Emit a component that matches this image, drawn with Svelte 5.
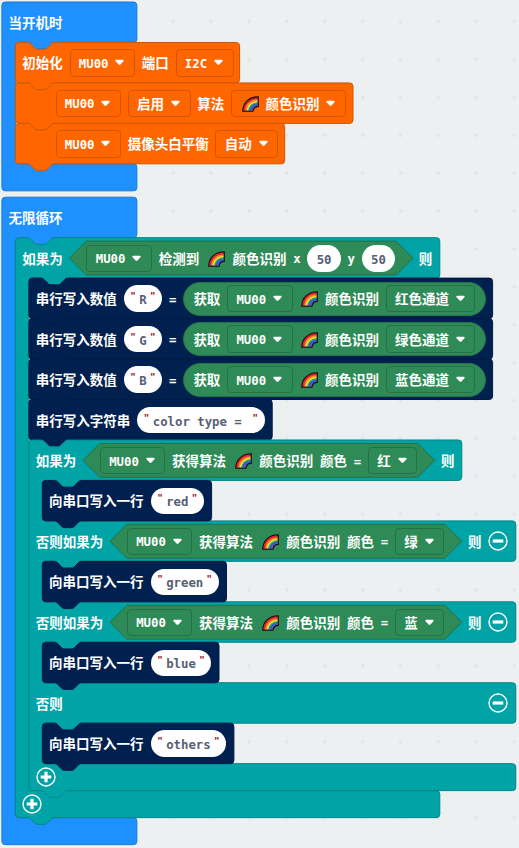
<script>
  const ROW = 40.46;
  const IND = 13.49;
  const S = 0.84375;
  const T1 = 1.9;
  const T2 = 197.3;
  const X0 = 1.9;
  const R = 3.4;

  const NOTCH = [
    ['c', 2, 0, 3, 1, 4, 2], ['l', 4, 4], ['c', 1, 1, 2, 2, 4, 2], ['h', 8],
    ['c', 2, 0, 3, -1, 4, -2], ['l', 4, -4], ['c', 1, -1, 2, -2, 4, -2]
  ];
  const notchRight = NOTCH.map(([c, ...n]) => c + n.map((v) => v * S).join(' ')).join('');
  // The same notch drawn from right to left
  const notchLeft = [
    ['c', -2, 0, -3, 1, -4, 2], ['l', -4, 4], ['c', -1, 1, -2, 2, -4, 2], ['h', -8],
    ['c', -2, 0, -3, -1, -4, -2], ['l', -4, -4], ['c', -1, -1, -2, -2, -4, -2]
  ].map(([c, ...n]) => c + n.map((v) => v * S).join(' ')).join('');

  const NS = 12.1;
  const NW = 32 * S;

  // arms: list of [top, bottom, right]; statement mouths lie between the arms
  function shape(x, arms, hat = false) {
    const y = arms[0][0];
    let d = `M${x} ${y + R}a${R} ${R} 0 0 1 ${R} ${-R}`;
    if (!hat) d += `H${x + NS}${notchRight}`;
    arms.forEach(([, b, r], i) => {
      d += `H${r - R}a${R} ${R} 0 0 1 ${R} ${R}V${b - R}a${R} ${R} 0 0 1 ${-R} ${R}`;
      if (i < arms.length - 1) {
        const m = x + IND;
        d += `H${m + NS + NW}${notchLeft}H${m + R}a${R} ${R} 0 0 0 ${-R} ${R}V${arms[i + 1][0] - R}a${R} ${R} 0 0 0 ${R} ${R}`;
      } else {
        if (!hat) d += `H${x + NS + NW}${notchLeft}`;
        d += `H${x + R}a${R} ${R} 0 0 1 ${-R} ${-R}Z`;
      }
    });
    return d;
  }
  function hex(a, b, top) {
    const t = top + 3.5, w = 16.9;
    return `M${a} ${t + w}l${w} ${-w}H${b - w}l${w} ${w}l${-w} ${w}H${a + w}Z`;
  }
  const y1 = (n) => T1 + 0.1 + n * ROW;
  const y2 = (n) => T2 - 0.1 + n * ROW;
  const x = (n) => X0 + n * IND;
  const plain = (col, y, right) => shape(x(col), [[y, y + ROW, right]]);
  const end = y2(14);

  const shapes = [
    ['blue', shape(x(0), [[y1(0), y1(1), 136.9], [y1(4), y1(4) + 27, 136.9]], true)],
    ['orange', plain(1, y1(1), 239.6)],
    ['orange', plain(1, y1(2), 353)],
    ['orange', plain(1, y1(3), 284.7)],
    ['blue', shape(x(0), [[y2(0), y2(1), 136.9], [end + 2 * 27, end + 3 * 27, 136.9]], true)],
    ['teal', shape(x(1), [[y2(1), y2(2), 439.8], [end + 27, end + 54, 439.8]])],
    ['navy', plain(2, y2(2), 492.6)],
    ['navy', plain(2, y2(3), 492.6)],
    ['navy', plain(2, y2(4), 492.6)],
    ['navy', plain(2, y2(5), 272.2)],
    ['teal', shape(x(2), [
      [y2(6), y2(7), 461.8], [y2(8), y2(9), 515.8], [y2(10), y2(11), 515.8],
      [y2(12), y2(13), 515.8], [end, end + 27, 515.8]
    ])],
    ['navy', plain(3, y2(7), 211.6)],
    ['navy', plain(3, y2(9), 226.5)],
    ['navy', plain(3, y2(11), 219)],
    ['navy', plain(3, y2(13), 233.9)],
    ['green', hex(69.4, 413, y2(1))],
    ['green', hex(83, 434.7, y2(6))],
    ['green', hex(110, 461.7, y2(8))],
    ['green', hex(110, 461.7, y2(10))]
  ];

  const t = (v) => ({ k: 'text', v });
  const f = (v) => ({ k: 'field', v });
  const mono = (v) => ({ k: 'mono', v });
  const rb = { k: 'rainbow', v: '颜色识别' };
  const num = (v) => ({ k: 'num', v });
  const str = (v) => ({ k: 'str', v });
  const MU = f('MU00');
  const channel = (letter, name) => ({
    ind: 2,
    items: [t('串行写入数值'), str(letter), mono('='), { k: 'pill', items: [t('获取'), MU, rb, f(name)] }]
  });
  const match = (name) => ({ k: 'hex', items: [MU, t('获得算法'), rb, t('颜色'), mono('='), f(name)] });
  const line = (v) => ({ ind: 3, items: [t('向串口写入一行'), str(v)] });
  const minus = { k: 'minus' };

  const stacks = [
    [
      { ind: 0, items: [t('当开机时')] },
      { ind: 1, items: [t('初始化'), MU, t('端口'), f('I2C')] },
      { ind: 1, lead: true, items: [MU, f('启用'), t('算法'), { k: 'field', rainbow: true, v: '颜色识别' }] },
      { ind: 1, lead: true, items: [MU, t('摄像头白平衡'), f('自动')] }
    ],
    [
      { ind: 0, items: [t('无限循环')] },
      { ind: 1, items: [t('如果为'), { k: 'hex', items: [MU, t('检测到'), rb, mono('x'), num('50'), mono('y'), num('50')] }, t('则')] },
      channel('R', '红色通道'),
      channel('G', '绿色通道'),
      channel('B', '蓝色通道'),
      { ind: 2, items: [t('串行写入字符串'), str('color type = ')] },
      { ind: 2, items: [t('如果为'), match('红'), t('则')] },
      line('red'),
      { ind: 2, items: [t('否则如果为'), match('绿'), t('则'), minus] },
      line('green'),
      { ind: 2, items: [t('否则如果为'), match('蓝'), t('则'), minus] },
      line('blue'),
      { ind: 2, wide: true, items: [t('否则'), minus] },
      line('others'),
      { ind: 2, short: true, items: [{ k: 'plus' }] },
      { ind: 1, short: true, items: [{ k: 'plus' }] }
    ]
  ];
</script>

{#snippet rainbow()}
  <svg class="rainbow" width="17" height="16" viewBox="0 0 17 16">
    <path d="M.7 15.3C.7 7 7 .7 16.3.7V10.4C13 10.4 11.4 12 11 15.3Z" fill="#7a4cab" />
    <g fill="none">
      <path d="M2.2 14.6C2.2 7.6 8 2.2 15.7 2.2" stroke="#ee1c25" stroke-width="2.2" />
      <path d="M4.1 14.6C4.1 8.6 9.2 4.1 15.7 4.1" stroke="#f98a1c" stroke-width="1.9" />
      <path d="M5.7 14.6C5.7 9.6 10 5.7 15.7 5.7" stroke="#ffe92e" stroke-width="1.7" />
      <path d="M7 14.6C7 10.4 10.6 7 15.7 7" stroke="#2fb457" stroke-width="1.3" />
      <path d="M8.2 14.6C8.2 11 11.4 8.3 15.7 8.3" stroke="#1668e3" stroke-width="1.6" />
      <path d="M.7 15.3C.7 7 7 .7 16.3.7V10.4C13 10.4 11.4 12 11 15.3Z" stroke="#111" stroke-width="1.1" />
    </g>
  </svg>
{/snippet}

{#snippet item(p)}
  {#if p.k === 'text'}
    <span class="label">{p.v}</span>
  {:else if p.k === 'mono'}
    <span class="label mono">{p.v}</span>
  {:else if p.k === 'rainbow'}
    <span class="label pic">{@render rainbow()}{p.v}</span>
  {:else if p.k === 'field'}
    <span class="field">
      {#if p.rainbow}
        <span class="label pic">{@render rainbow()}{p.v}</span>
      {:else}
        <span class="label" class:mono={/^[A-Z0-9]+$/.test(p.v)}>{p.v}</span>
      {/if}
      <svg class="caret" width="9" height="7" viewBox="0 0 9 7"><path d="M1.2.7H7.8Q9.3 1.1 8.2 2.5L5.4 5.6Q4.5 6.5 3.6 5.6L.8 2.5Q-.3 1.1 1.2.7Z" fill="#fff" /></svg>
    </span>
  {:else if p.k === 'num'}
    <span class="value mono"><span>{p.v}</span></span>
  {:else if p.k === 'str'}
    <span class="value mono str"><i>"</i><span>{p.v}</span><i>"</i></span>
  {:else if p.k === 'pill' || p.k === 'hex'}
    <span class={p.k}>
      {#each p.items as q}{@render item(q)}{/each}
    </span>
  {:else}
    <svg class="round" width="20" height="20" viewBox="0 0 20 20">
      <circle cx="10" cy="10" r="9" fill="none" stroke="#fff" stroke-width="1.4" />
      <path d={p.k === 'minus' ? 'M4.7 10H15.3' : 'M4.7 10H15.3M10 4.7V15.3'} stroke="#fff" stroke-width="3.2" />
    </svg>
  {/if}
{/snippet}

<main>
  <svg class="blocks" width="519" height="848">
    <defs>
      <pattern id="grid" x="2.55" y="2.55" width="37.9" height="37.9" patternUnits="userSpaceOnUse">
        <path d="M16.7 18.95H21.2M18.95 16.7V21.2" stroke="#dde1e2" stroke-width="1.2" />
      </pattern>
    </defs>
    <rect width="519" height="848" fill="url(#grid)" />
    {#each shapes as [tone, d]}<path class={tone} {d} />{/each}
  </svg>
  {#each stacks as rows}
    <section>
      {#each rows as r}
        <div class="row ind{r.ind}" class:lead={r.lead} class:wide={r.wide} class:short={r.short}>
          {#each r.items as p}{@render item(p)}{/each}
        </div>
      {/each}
    </section>
  {/each}
</main>

<style>
  :global(body) { margin: 0; background: #ecf0f1; }
  main {
    position: relative;
    width: 519px;
    height: 848px;
    overflow: hidden;
    background: #ecf0f1;
    box-sizing: border-box;
    padding-top: 2px;
    font: 700 13.5px/20px "Noto Sans CJK SC", sans-serif;
    color: #fff;
  }
  .blocks { position: absolute; left: 0; top: 0; display: block; }
  .blue { fill: #1e90ff; stroke: #1b78d0; }
  .orange { fill: #ff6600; stroke: #cc5603; }
  .teal { fill: #00a4a6; stroke: #058587; }
  .navy { fill: #002050; stroke: #001a42; }
  .green { fill: #2e8b57; stroke: #257047; }
  section { position: relative; display: flex; flex-direction: column; }
  section:first-of-type { height: 195.3px; }
  .row {
    display: flex;
    align-items: center;
    gap: 6.75px;
    height: 40.46px;
    flex: none;
    padding-top: 0.6px;
    box-sizing: border-box;
  }
  .short { height: 27px; padding-top: 0; }
  .ind0 { padding-left: 8.6px; }
  .ind1 { padding-left: 22.3px; }
  .ind2 { padding-left: 35.7px; }
  .ind3 { padding-left: 49.1px; }
  .lead { padding-left: 55.5px; }
  .wide { justify-content: space-between; padding-right: 10.6px; }
  .label { white-space: pre; flex: none; padding-bottom: 1px; }
  .label.mono { padding: 2px 0 0; }
  .mono { font-family: "DejaVu Sans Mono", monospace; font-size: 12.33px; }
  .pic { display: inline-flex; align-items: center; }
  .rainbow { margin: 2px 7.6px 0 1.9px; flex: none; }
  .field {
    display: flex;
    align-items: center;
    flex: none;
    height: 27.5px;
    box-sizing: border-box;
    border: 1px solid #257047;
    border-radius: 4px;
    padding: 0 9.6px 0 8.3px;
  }
  section:first-of-type .field { border-color: #d45500; }
  .field .rainbow { margin-left: 1.2px; margin-right: 7px; }
  .pill .rainbow { margin-left: 1.3px; margin-right: 7.3px; }
  .caret { margin-left: 6.9px; flex: none; }
  .hex { display: flex; align-items: center; gap: 6.75px; flex: none; padding: 0 16.9px; }
  .pill {
    display: flex;
    align-items: center;
    gap: 6.75px;
    flex: none;
    height: 34px;
    box-sizing: border-box;
    border: 1px solid #257047;
    border-radius: 17px;
    background: #2e8b57;
    padding: 0 9.3px;
  }
  .value {
    display: flex;
    flex: none;
    align-items: center;
    height: 26.5px;
    box-sizing: border-box;
    border-radius: 13.5px;
    background: #fff;
    color: #575e75;
    padding: 0 9.3px;
  }
  .value span { white-space: pre; padding-top: 3px; }
  .str { padding: 0 5.6px; margin-left: 0.3px; }
  .str i {
    font: 700 10.5px/14px "Liberation Sans", sans-serif;
    color: #a3232b;
    width: 9.9px;
    box-sizing: border-box;
    padding: 0 2.8px 0 1.2px;
    height: 19px;
  }
  .str i:last-child { padding: 0 0 0 3.6px; }
  .round { flex: none; margin-left: 0.2px; }
</style>
